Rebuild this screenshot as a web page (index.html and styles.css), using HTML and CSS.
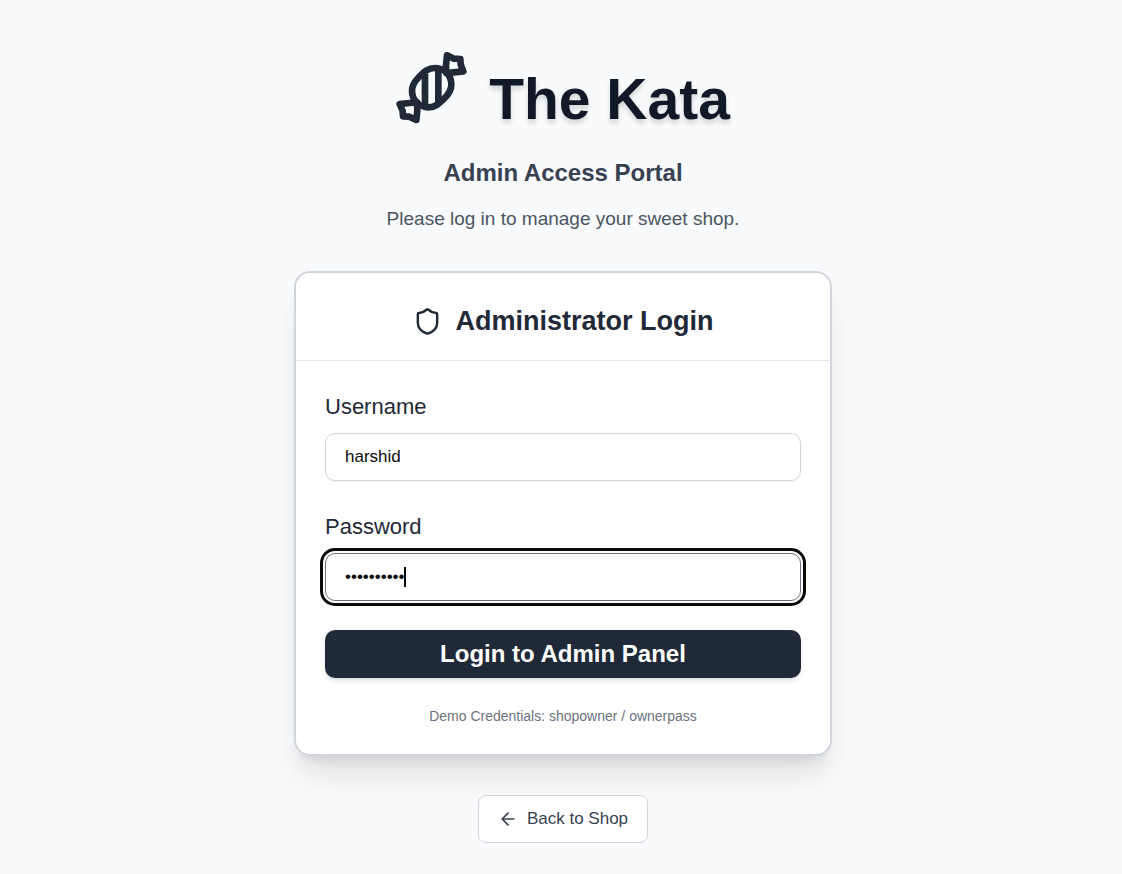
FILE: index.html
```html
<!DOCTYPE html>
<html lang="en">
<head>
  <meta charset="utf-8">
  <meta name="viewport" content="width=device-width, initial-scale=1">
  <title>The Kata - Admin Login</title>
  <link rel="stylesheet" href="styles.css">
</head>
<body>
  <main class="page">
    <header class="intro">
      <div class="brand">
        <svg class="brand-icon" viewBox="33 33 213 219" fill="none" stroke="currentColor" stroke-width="20" stroke-linecap="round" stroke-linejoin="round" aria-hidden="true">
          <path d="M149 84C178 84 199 105 199 134C199 151 191 162 179 174C163 190 152 202 131 202C102 202 81 180 81 152C81 134 90 123 102 111C118 95 129 84 149 84Z"/>
          <path d="M120 101V195M160 92V188" stroke-linecap="butt"/>
          <path d="M184 99L183 76L186 46L207 56L226 57L227 73L235 94L206 97Z"/>
          <path d="M96 187L97 210L94 240L73 230L54 229L53 213L44 192L74 189Z"/>
        </svg>
        <h1 class="brand-name">The Kata</h1>
      </div>
      <p class="portal">Admin Access Portal</p>
      <p class="hint">Please log in to manage your sweet shop.</p>
    </header>

    <section class="card">
      <div class="card-header">
        <svg class="shield" viewBox="0 0 24 24" fill="none" stroke="currentColor" stroke-width="2" stroke-linecap="round" stroke-linejoin="round" aria-hidden="true">
          <path d="M20 13c0 5-3.500 7.500-7.660 8.950a1 1 0 0 1-.67-.01C7.500 20.500 4 18 4 13V6a1 1 0 0 1 1-1c2 0 4.500-1.200 6.240-2.720a1.170 1.170 0 0 1 1.520 0C14.510 3.810 17 5 19 5a1 1 0 0 1 1 1z"/>
        </svg>
        <h2 class="card-title">Administrator Login</h2>
      </div>
      <form class="form">
        <div class="field">
          <label class="label" for="username">Username</label>
          <input class="input" id="username" type="text" value="harshid">
        </div>
        <div class="field">
          <label class="label" for="password">Password</label>
          <div class="control">
            <input class="input input-active" id="password" type="password" value="harshid123">
            <span class="caret"></span>
          </div>
        </div>
        <button class="submit" type="submit">Login to Admin Panel</button>
        <p class="demo">Demo Credentials: shopowner / ownerpass</p>
      </form>
    </section>

    <button class="back" type="button">
      <svg class="arrow" viewBox="0 0 24 24" fill="none" stroke="currentColor" stroke-width="2" stroke-linecap="round" stroke-linejoin="round" aria-hidden="true">
        <path d="m12 19-7-7 7-7M19 12H5"/>
      </svg>
      Back to Shop
    </button>
  </main>
</body>
</html>
```
FILE: styles.css
```css
* {
  box-sizing: border-box;
}

body {
  margin: 0;
  background: #f9fafb;
  color: #1f2937;
  font-family: "Liberation Sans", Arial, sans-serif;
}

h1, h2, p {
  margin: 0;
}

.page {
  min-height: 100vh;
  display: flex;
  flex-direction: column;
  align-items: center;
  padding: 51px 20px 30px 24px;
}

.intro {
  display: flex;
  flex-direction: column;
  align-items: center;
  margin-bottom: 38px;
  text-align: center;
}

.brand {
  display: flex;
  align-items: flex-end;
  gap: 22px;
  margin-bottom: 29px;
}

.brand-icon {
  width: 71px;
  height: 73px;
  margin-bottom: 4px;
}

.brand-name {
  color: #111827;
  font-size: 57px;
  line-height: 58px;
  text-shadow: 0 4px 5px rgba(0, 0, 0, 0.15);
}

.portal {
  margin-bottom: 16px;
  color: #374151;
  font-size: 24px;
  font-weight: 700;
  line-height: 32px;
}

.hint {
  color: #4b5563;
  font-size: 19px;
  line-height: 28px;
}

.card {
  width: 100%;
  max-width: 538px;
  margin-bottom: 39px;
  border: 2px solid #d1d5db;
  border-radius: 16px;
  background: #fff;
  box-shadow: 0 24px 30px -6px rgba(0, 0, 0, 0.1), 0 10px 12px -7px rgba(0, 0, 0, 0.1);
}

.card-header {
  display: flex;
  align-items: center;
  justify-content: center;
  gap: 14px;
  padding: 30px 28px 21px;
  border-bottom: 1px solid #e5e7eb;
}

.shield {
  width: 29px;
  height: 29px;
}

.card-title {
  font-size: 27px;
  line-height: 36px;
}

.form {
  display: flex;
  flex-direction: column;
  padding: 34px 29px 28px;
}

.field {
  display: flex;
  flex-direction: column;
  gap: 14px;
  margin-bottom: 34px;
}

.field:nth-of-type(2) {
  margin-bottom: 29px;
}

.label {
  font-size: 22px;
  line-height: 24px;
}

.control {
  position: relative;
}

.input {
  display: block;
  width: 100%;
  height: 48px;
  padding: 0 19px;
  border: 1px solid #d1d5db;
  border-radius: 10px;
  background: #fff;
  box-shadow: 0 1px 2px rgba(0, 0, 0, 0.05);
  color: #0a0a0a;
  font-family: inherit;
  font-size: 17px;
  outline: none;
}

.input-active,
.input:focus {
  border-color: #6b7280;
  box-shadow: 0 0 0 2px #fff, 0 0 0 5px #0a0a0a;
}

.caret {
  position: absolute;
  top: 14px;
  left: 79px;
  width: 2px;
  height: 20px;
  background: #0a0a0a;
}

.submit {
  height: 48px;
  margin-bottom: 28px;
  border: 0;
  border-radius: 10px;
  background: #1f2937;
  box-shadow: 0 4px 6px -1px rgba(0, 0, 0, 0.1), 0 2px 4px -2px rgba(0, 0, 0, 0.1);
  color: #fff;
  font-family: inherit;
  font-size: 24px;
  font-weight: 700;
}

.demo {
  color: #6b7280;
  font-size: 14px;
  line-height: 20px;
  text-align: center;
}

.back {
  display: flex;
  align-items: center;
  gap: 9px;
  height: 48px;
  padding: 0 19px;
  border: 1px solid #d1d5db;
  border-radius: 8px;
  background: #fff;
  color: #374151;
  font-family: inherit;
  font-size: 17px;
}

.arrow {
  width: 20px;
  height: 20px;
}
```
